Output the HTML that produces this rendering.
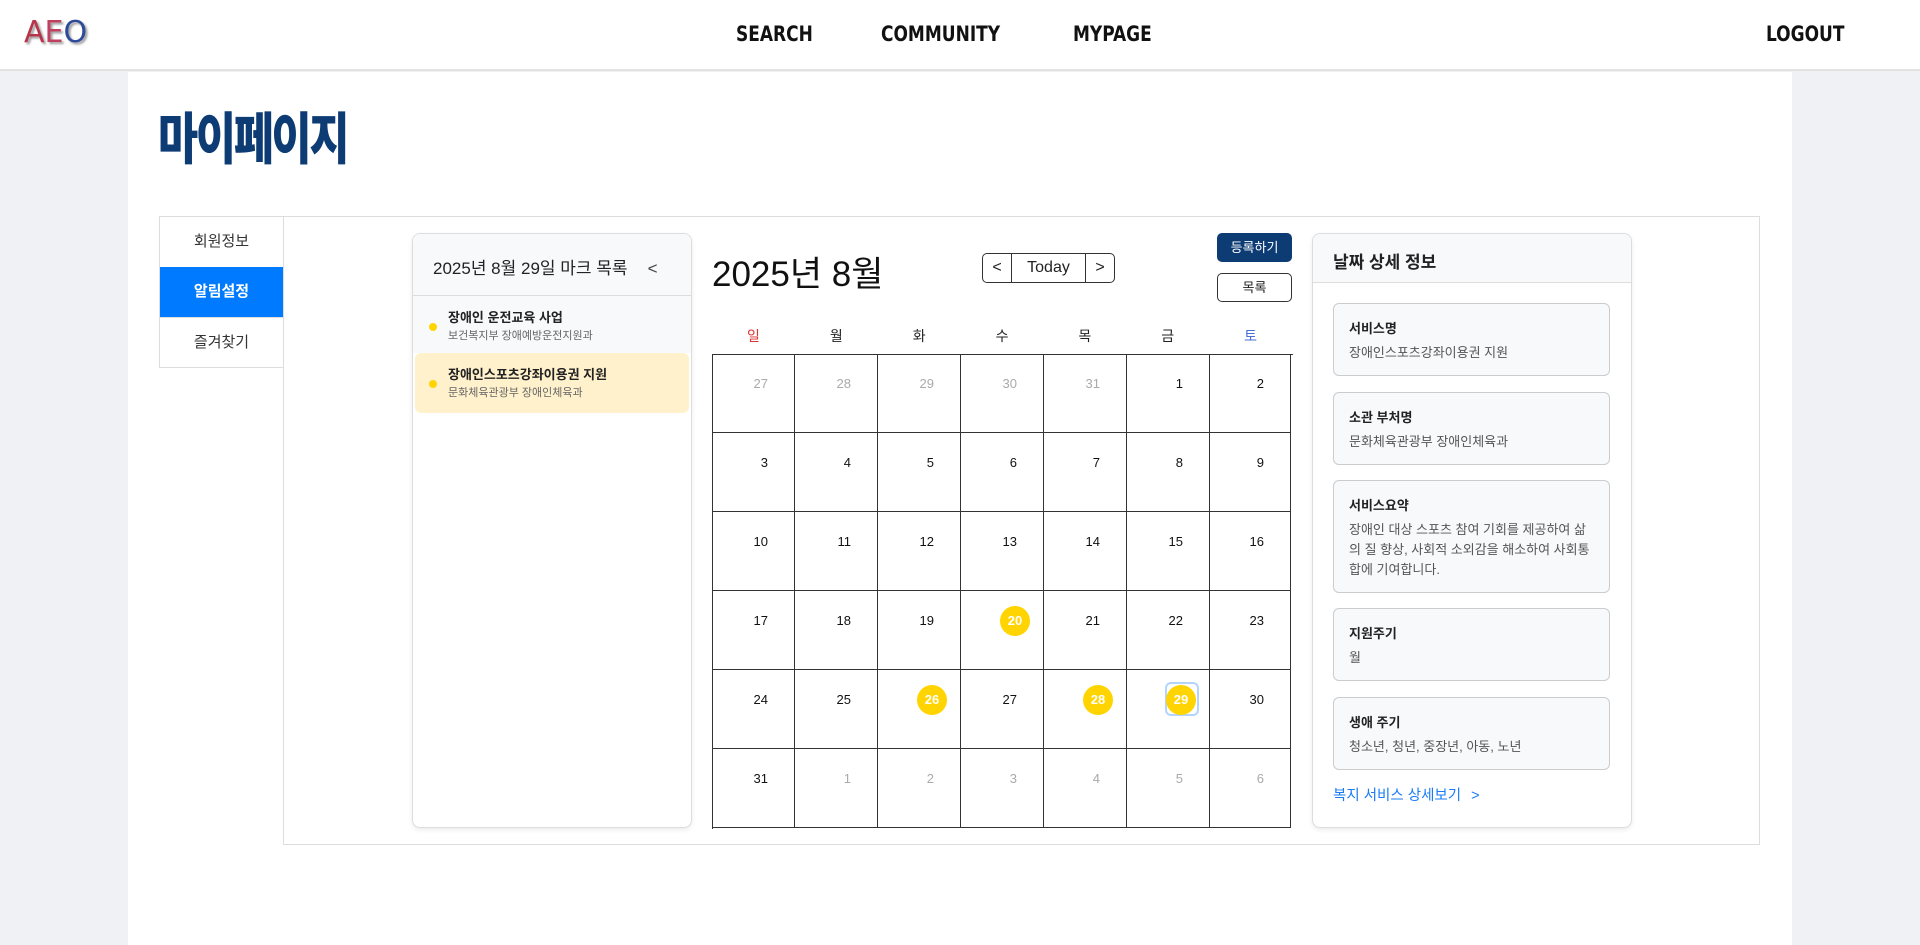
<!DOCTYPE html>
<html><head><meta charset="utf-8">
<style>
*{box-sizing:border-box;margin:0;padding:0}
body{width:1920px;height:945px;background:#f0f1f4;font-family:"Liberation Sans","Noto Sans CJK KR",sans-serif;position:relative;overflow:hidden;color:#222}
.abs{position:absolute}
#hdr{left:0;top:0;width:1920px;height:71px;background:#fff;border-bottom:2px solid #e2e2e2}
.nav{position:absolute;top:22px;font-size:21px;font-weight:bold;color:#111;font-family:"Comic Sans MS","DejaVu Sans Condensed","Liberation Sans",sans-serif;transform:scaleX(0.9);transform-origin:left}
#main{left:128px;top:72px;width:1664px;height:873px;background:#fff}
.tab{position:absolute;left:160px;width:123px;height:50px;text-align:center;line-height:50px;font-size:15px;color:#333;background:#fff}
.cell{position:absolute;border-right:1px solid #333;border-bottom:1px solid #333;width:83px;height:79px}
.num{position:absolute;right:26px;top:22px;font-size:13px;color:#111;text-align:right}
.num.g{color:#aaa}
.circ{position:absolute;width:30px;height:30px;border-radius:50%;background:#ffd400;color:#fff;font-weight:bold;font-size:13px;text-align:center;line-height:30px;right:13px;top:15px}
.card{position:absolute;left:1333px;width:277px;background:#f8f9fa;border:1px solid #ccc;border-radius:6px;padding:14px 15px}
.card b{display:block;font-size:13px;color:#222;margin-bottom:6px}
.card span{font-size:13px;color:#555;line-height:20px}
</style></head><body>
<div id="hdr" class="abs">
 <div class="abs" style="left:24px;top:15px;font-size:30px;color:#b8344a;text-shadow:2px 2px 2px #999;font-family:'Comic Sans MS','DejaVu Sans',sans-serif">A<span style="color:#c04060">E</span><span style="color:#2e4a9a">O</span></div>
 <div class="nav" style="left:736px">SEARCH</div>
 <div class="nav" style="left:881px">COMMUNITY</div>
 <div class="nav" style="left:1073px">MYPAGE</div>
 <div class="nav" style="left:1766px">LOGOUT</div>
</div>
<div id="main" class="abs"></div>
<div class="abs" style="left:158px;top:95px;font-size:56px;font-weight:900;color:#0d3b74;letter-spacing:-3px;transform:scaleX(0.78);transform-origin:left">마이페이지</div>

<div class="abs" style="left:283px;top:216px;width:1477px;height:629px;border:1px solid #ddd"></div>
<div class="abs" style="left:159px;top:216px;width:125px;height:152px;border:2px solid #ddd"></div>
<div class="tab" style="top:217px">회원정보</div>
<div class="tab" style="top:267px;background:#007bff;color:#fff;font-weight:bold">알림설정</div>
<div class="tab" style="top:317px;border-top:1px solid #ddd">즐겨찾기</div>

<div class="abs" style="left:412px;top:233px;width:280px;height:595px;border:1px solid #ddd;border-radius:8px;background:#fff;box-shadow:0 2px 5px rgba(0,0,0,.08);overflow:hidden">
 <div style="height:62px;background:#f8f9fa;border-bottom:1px solid #ddd;padding:20px 0 0 20px;font-size:17px;color:#222">2025년 8월 29일 마크 목록<span style="margin-left:20px;color:#444">&lt;</span></div>
 <div style="height:57px;background:#f8f9fa;position:relative">
  <div class="abs" style="left:16px;top:27px;width:8px;height:8px;border-radius:50%;background:#ffd400"></div>
  <div class="abs" style="left:35px;top:11px;font-size:13px;font-weight:bold">장애인 운전교육 사업</div>
  <div class="abs" style="left:35px;top:31px;font-size:11px;color:#666">보건복지부 장애예방운전지원과</div>
 </div>
 <div style="height:60px;background:#fff1cc;position:relative;margin:0 2px;border-radius:6px">
  <div class="abs" style="left:14px;top:27px;width:8px;height:8px;border-radius:50%;background:#ffd400"></div>
  <div class="abs" style="left:33px;top:11px;font-size:13px;font-weight:bold">장애인스포츠강좌이용권 지원</div>
  <div class="abs" style="left:33px;top:31px;font-size:11px;color:#666">문화체육관광부 장애인체육과</div>
 </div>
</div>

<div class="abs" style="left:712px;top:246px;font-size:35px;color:#111">2025년 8월</div>
<div class="abs" style="left:982px;top:253px;width:133px;height:30px;border:1px solid #333;border-radius:5px;display:flex;font-size:16px;line-height:28px;text-align:center">
 <div style="width:29px;border-right:1px solid #333">&lt;</div><div style="width:74px;border-right:1px solid #333">Today</div><div style="flex:1">&gt;</div>
</div>
<div class="abs" style="left:1217px;top:233px;width:75px;height:29px;background:#0d3b74;border-radius:5px;color:#fff;font-size:13px;text-align:center;line-height:29px">등록하기</div>
<div class="abs" style="left:1217px;top:273px;width:75px;height:29px;border:1px solid #333;border-radius:5px;font-size:13px;text-align:center;line-height:27px">목록</div>
<div class="abs" style="left:712px;top:326px;width:580px;display:flex;font-size:14px;text-align:center">
 <div style="flex:1;color:#d33">일</div><div style="flex:1">월</div><div style="flex:1">화</div><div style="flex:1">수</div><div style="flex:1">목</div><div style="flex:1">금</div><div style="flex:1;color:#4a6fd6">토</div>
</div>
<div class="abs" style="left:712px;top:354px;width:581px;height:475px;border-left:1px solid #333;border-top:1px solid #333"></div>
<div id="grid"></div>
<script>
var days=[[27,28,29,30,31,1,2],[3,4,5,6,7,8,9],[10,11,12,13,14,15,16],[17,18,19,20,21,22,23],[24,25,26,27,28,29,30],[31,1,2,3,4,5,6]];
var hl={"3-3":1,"4-2":1,"4-4":1,"4-5":2};
var h="";
for(var r=0;r<6;r++)for(var c=0;c<7;c++){
 var x=712+c*83,y=354+r*79,w=(c==6?81:83);
 var d=days[r][c];var g=(r==0&&c<5)||(r==5&&c>0);
 var k=r+"-"+c;var inner;
 if(hl[k]){inner=(hl[k]==2?'<div style="position:absolute;right:10px;top:12px;width:34px;height:34px;border:2px solid #b3d4fc;border-radius:6px"></div>':'')+'<div class="circ">'+d+'</div>';}
 else inner='<div class="num'+(g?' g':'')+'">'+d+'</div>';
 h+='<div class="cell" style="left:'+x+'px;top:'+y+'px;width:'+w+'px">'+inner+'</div>';
}
document.getElementById("grid").innerHTML=h;
</script>

<div class="abs" style="left:1312px;top:233px;width:320px;height:595px;border:1px solid #ddd;border-radius:8px;background:#fff;box-shadow:0 2px 5px rgba(0,0,0,.08);overflow:hidden">
 <div style="height:49px;background:#f8f9fa;border-bottom:1px solid #ddd;padding:14px 0 0 20px;font-size:17px;font-weight:bold;color:#222">날짜 상세 정보</div>
</div>
<div class="card" style="top:303px;height:73px"><b>서비스명</b><span>장애인스포츠강좌이용권 지원</span></div>
<div class="card" style="top:392px;height:73px"><b>소관 부처명</b><span>문화체육관광부 장애인체육과</span></div>
<div class="card" style="top:480px;height:113px"><b>서비스요약</b><span>장애인 대상 스포츠 참여 기회를 제공하여 삶의 질 향상, 사회적 소외감을 해소하여 사회통합에 기여합니다.</span></div>
<div class="card" style="top:608px;height:73px"><b>지원주기</b><span>월</span></div>
<div class="card" style="top:697px;height:73px"><b>생애 주기</b><span>청소년, 청년, 중장년, 아동, 노년</span></div>
<div class="abs" style="left:1333px;top:784px;font-size:14.5px;color:#1a7cf5">복지 서비스 상세보기 <span style="margin-left:6px">&gt;</span></div>
</body></html>
